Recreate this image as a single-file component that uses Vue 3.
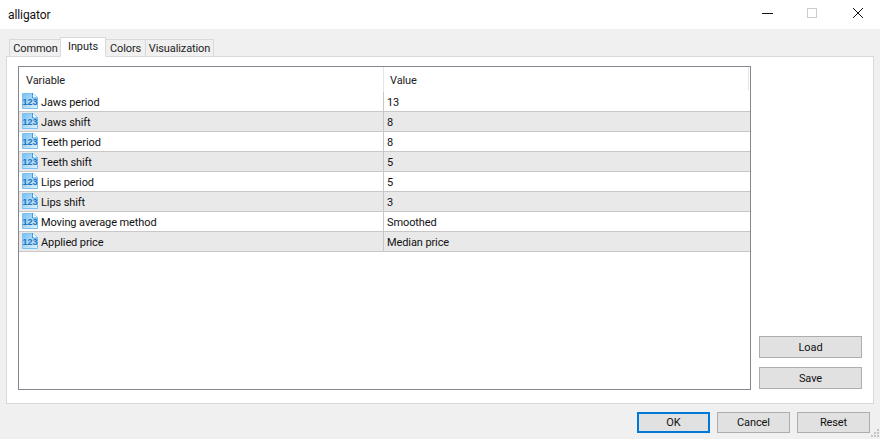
<script setup>
const rows = [
  { name: "Jaws period", value: "13" },
  { name: "Jaws shift", value: "8" },
  { name: "Teeth period", value: "8" },
  { name: "Teeth shift", value: "5" },
  { name: "Lips period", value: "5" },
  { name: "Lips shift", value: "3" },
  { name: "Moving average method", value: "Smoothed" },
  { name: "Applied price", value: "Median price" },
];
const tabs = ["Common", "Inputs", "Colors", "Visualization"];
</script>

<template>
  <div class="dialog">
    <header class="titlebar">
      <span class="title">alligator</span>
      <div class="win-controls">
        <svg width="46" height="29" viewBox="0 0 46 29"><path d="M20 13.5H31" stroke="#111" fill="none" /></svg>
        <svg width="46" height="29" viewBox="0 0 46 29"><rect x="19.5" y="8.5" width="9" height="9" stroke="#ccc" fill="none" /></svg>
        <svg width="46" height="29" viewBox="0 0 46 29"><path d="M19 8L29 18M29 8L19 18" stroke="#111" fill="none" /></svg>
      </div>
    </header>

    <main class="body">
      <nav class="tabs">
        <div v-for="tab in tabs" :key="tab" class="tab" :class="{ 'tab--active': tab === 'Inputs' }">{{ tab }}</div>
      </nav>

      <section class="panel">
        <div class="list">
          <div class="list-head">
            <div class="cell-name">Variable</div>
            <div class="cell-value">Value</div>
          </div>
          <div v-for="(row, i) in rows" :key="row.name" class="row" :class="{ 'row--alt': i % 2 === 1 }">
            <div class="row-name">
              <svg class="icon" width="16" height="17" viewBox="0 0 16 17">
                <defs>
                  <linearGradient id="pageFill" x1="0" y1="0" x2="1" y2="1">
                    <stop offset="0" stop-color="#74c0f4" />
                    <stop offset="1" stop-color="#e4f3fd" />
                  </linearGradient>
                </defs>
                <path d="M0.5 1.5H11L15.5 5.5V16.5H0.5Z" fill="url(#pageFill)" stroke="#7cc0ef" />
                <path d="M10.5 1V6H15.5" fill="#fff" stroke="#3a9ae2" />
                <text x="0.5" y="12.5" textLength="15" class="icon-text">123</text>
              </svg>
              <span>{{ row.name }}</span>
            </div>
            <div class="row-value">{{ row.value }}</div>
          </div>
        </div>

        <aside class="side-actions">
          <button class="btn btn--side">Load</button>
          <button class="btn btn--side">Save</button>
        </aside>
      </section>

      <footer class="actions">
        <button class="btn btn--main btn--default">OK</button>
        <button class="btn btn--main">Cancel</button>
        <button class="btn btn--main">Reset</button>
      </footer>
      <svg class="grip" width="12" height="12" viewBox="0 0 12 12">
        <path d="M9 2h2v2H9zM6 5h2v2H6zM9 5h2v2H9zM3 8h2v2H3zM6 8h2v2H6zM9 8h2v2H9z" fill="#c4c4c4" />
      </svg>
    </main>
  </div>
</template>

<style scoped>
.dialog {
  width: 880px;
  height: 439px;
  overflow: hidden;
  display: flex;
  flex-direction: column;
  background: #fff;
  color: #111;
  font-family: Roboto, "Liberation Sans", sans-serif;
  font-size: 11px;
  letter-spacing: -0.1px;
}

.titlebar {
  flex: 0 0 29px;
  display: flex;
  align-items: center;
  justify-content: space-between;
}

.title {
  margin-left: 8px;
  font-size: 12px;
}

.win-controls {
  display: flex;
  height: 29px;
}

.win-controls svg {
  display: block;
}

.body {
  position: relative;
  flex: 1;
  display: flex;
  flex-direction: column;
  padding: 0 6px;
  background: #f0f0f0;
}

.tabs {
  display: flex;
  align-items: flex-end;
  height: 28px;
  padding-left: 3px;
  margin-bottom: -1px;
  position: relative;
  z-index: 1;
}

.tab {
  height: 18px;
  line-height: 18px;
  box-sizing: border-box;
  text-align: center;
  border: 1px solid #d9d9d9;
  margin-left: -1px;
  background: #f0f0f0;
  color: #222;
}

.tab:nth-child(1) {
  width: 52px;
  margin-left: 0;
  padding-left: 1px;
}

.tab:nth-child(2) {
  width: 46px;
}

.tab:nth-child(3) {
  width: 41px;
}

.tab:nth-child(4) {
  width: 69px;
}

.tab--active {
  height: 20px;
  line-height: 18px;
  background: #fff;
  border-bottom-color: #fff;
  position: relative;
}

.panel {
  height: 348px;
  box-sizing: border-box;
  display: flex;
  padding: 9px 11px 14px 11px;
  background: #fff;
  border: 1px solid #d9d9d9;
}

.list {
  width: 733px;
  height: 324px;
  box-sizing: border-box;
  border: 1px solid #828790;
  background: #fff;
}

.list-head {
  display: flex;
  height: 25px;
  line-height: 27px;
  color: #222;
  background: linear-gradient(#e6e6e6, #e6e6e6) 729px 1px / 1px 23px no-repeat;
}

.cell-name {
  width: 365px;
  box-sizing: border-box;
  padding-left: 7px;
  border-right: 1px solid #e4e4e4;
}

.cell-value {
  padding-left: 6px;
}

.row {
  display: flex;
  height: 20px;
  box-sizing: border-box;
  line-height: 21px;
  border-bottom: 1px solid #c8c8c8;
}

.row--alt {
  background: #e9e9e9;
}

.row-name {
  width: 365px;
  box-sizing: border-box;
  padding-left: 3px;
  display: flex;
  align-items: flex-start;
  gap: 3px;
  border-right: 1px solid #c8c8c8;
}

.icon {
  flex: none;
}

.icon-text {
  font-family: "Liberation Sans", sans-serif;
  font-size: 9px;
  font-weight: 700;
  letter-spacing: 0;
  fill: #2272bb;
}

.row-value {
  padding-left: 3px;
}

.side-actions {
  display: flex;
  flex-direction: column;
  justify-content: flex-end;
  gap: 9px;
  margin-left: 8px;
}

.btn {
  display: block;
  padding: 0;
  box-sizing: border-box;
  font: inherit;
  letter-spacing: inherit;
  color: #111;
  background: #e1e1e1;
  border: 1px solid #adadad;
}

.btn--side {
  width: 103px;
  height: 22px;
}

.actions {
  display: flex;
  justify-content: flex-end;
  gap: 7px;
  margin-top: 8px;
  padding-right: 4px;
}

.btn--main {
  width: 73px;
  height: 21px;
}

.btn--default {
  border: 2px solid #0078d7;
}

.grip {
  position: absolute;
  right: 0;
  bottom: 0;
}
</style>

<style>
html,
body {
  margin: 0;
  background: #f0f0f0;
}
</style>
